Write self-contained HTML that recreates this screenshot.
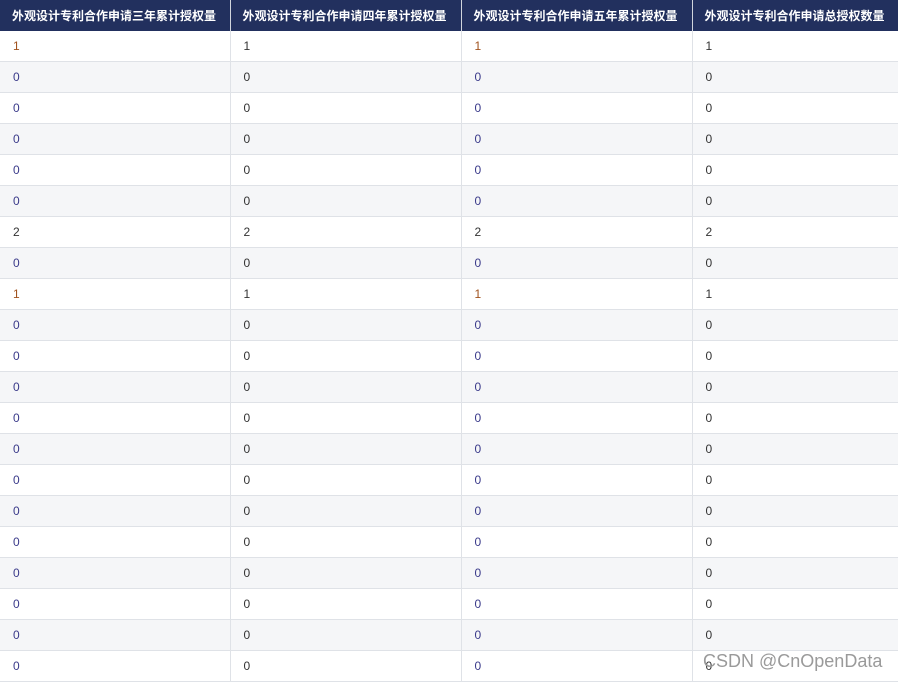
<!DOCTYPE html><html><head><meta charset="utf-8"><style>
body{margin:0;width:898px;height:682px;overflow:hidden;background:#fff;font-family:"Liberation Sans","Noto Sans CJK SC",sans-serif;position:relative}
table{border-collapse:collapse;table-layout:fixed;width:898px}
td,th{height:30px;padding:0 0 0 13px;text-align:left;font-size:12px;border-right:1px solid #dfe2e7;border-bottom:1px solid #dfe2e7;color:#333;white-space:nowrap;overflow:hidden}
th{background:#22305e;color:#fff;font-weight:bold;font-size:12px;height:31px;border-bottom:none;border-right:1px solid #d0d4dc;padding-left:12px}
tr:nth-child(odd) td{background:#f5f6f8}
.c1{color:#3a3a8a}
.wm{position:absolute;left:703px;top:651px;font-size:18px;color:#9a9a9a}
</style></head><body>
<table>
<colgroup><col style="width:230px"><col style="width:231px"><col style="width:231px"><col style="width:206px"></colgroup>
<tr><th>外观设计专利合作申请三年累计授权量</th><th>外观设计专利合作申请四年累计授权量</th><th>外观设计专利合作申请五年累计授权量</th><th>外观设计专利合作申请总授权数量</th></tr>
<tr><td style="color:#a0521d">1</td><td>1</td><td style="color:#a0521d">1</td><td>1</td></tr>
<tr><td class="c1">0</td><td>0</td><td class="c1">0</td><td>0</td></tr>
<tr><td class="c1">0</td><td>0</td><td class="c1">0</td><td>0</td></tr>
<tr><td class="c1">0</td><td>0</td><td class="c1">0</td><td>0</td></tr>
<tr><td class="c1">0</td><td>0</td><td class="c1">0</td><td>0</td></tr>
<tr><td class="c1">0</td><td>0</td><td class="c1">0</td><td>0</td></tr>
<tr><td>2</td><td>2</td><td>2</td><td>2</td></tr>
<tr><td class="c1">0</td><td>0</td><td class="c1">0</td><td>0</td></tr>
<tr><td style="color:#a0521d">1</td><td>1</td><td style="color:#a0521d">1</td><td>1</td></tr>
<tr><td class="c1">0</td><td>0</td><td class="c1">0</td><td>0</td></tr>
<tr><td class="c1">0</td><td>0</td><td class="c1">0</td><td>0</td></tr>
<tr><td class="c1">0</td><td>0</td><td class="c1">0</td><td>0</td></tr>
<tr><td class="c1">0</td><td>0</td><td class="c1">0</td><td>0</td></tr>
<tr><td class="c1">0</td><td>0</td><td class="c1">0</td><td>0</td></tr>
<tr><td class="c1">0</td><td>0</td><td class="c1">0</td><td>0</td></tr>
<tr><td class="c1">0</td><td>0</td><td class="c1">0</td><td>0</td></tr>
<tr><td class="c1">0</td><td>0</td><td class="c1">0</td><td>0</td></tr>
<tr><td class="c1">0</td><td>0</td><td class="c1">0</td><td>0</td></tr>
<tr><td class="c1">0</td><td>0</td><td class="c1">0</td><td>0</td></tr>
<tr><td class="c1">0</td><td>0</td><td class="c1">0</td><td>0</td></tr>
<tr><td class="c1">0</td><td>0</td><td class="c1">0</td><td>0</td></tr>
</table>
<div class="wm">CSDN @CnOpenData</div>
</body></html>
